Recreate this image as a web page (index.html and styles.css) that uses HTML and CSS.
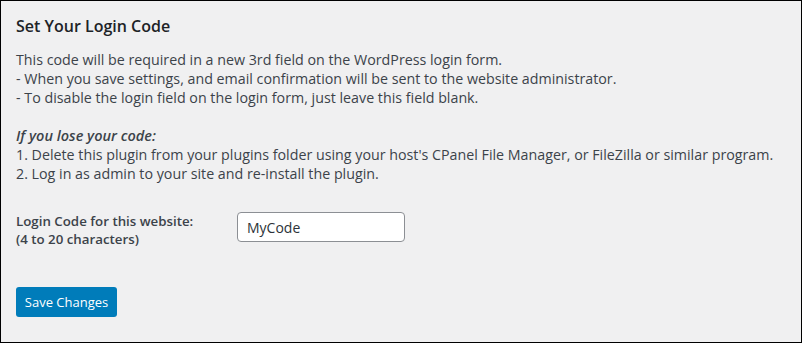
FILE: index.html
```html
<!DOCTYPE html>
<html lang="en">

<head>
    <meta charset="UTF-8">
    <meta name="viewport" content="width=device-width, initial-scale=1.0">
    <title>Set Your Login Code</title>
    <link rel="stylesheet" href="styles.css">
</head>

<body>
    <!-- 설정 박스 -->
    <div class="wrap">
        <h2 class="title">Set Your Login Code</h2>

        <p class="desc">
            This code will be required in a new 3rd field on the WordPress login form.<br>
            - When you save settings, and email confirmation will be sent to the website administrator.<br>
            - To disable the login field on the login form, just leave this field blank.
        </p>

        <p class="desc">
            <em class="lose">If you lose your code:</em><br>
            1. Delete this plugin from your plugins folder using your host's CPanel File Manager, or FileZilla or similar program.<br>
            2. Log in as admin to your site and re-install the plugin.
        </p>

        <!-- 입력 줄 -->
        <div class="row">
            <label class="lbl" for="code">Login Code for this website:<br>(4 to 20 characters)</label>
            <input type="text" id="code" class="code" value="MyCode">
        </div>

        <div class="submit">
            <button class="btn">Save Changes</button>
        </div>
    </div>
</body>

</html>
```

FILE: styles.css
```css
html,
body {
    margin: 0;
    padding: 0;
}

body {
    background: #fff;
    font-family: "Open Sans", "Liberation Sans", sans-serif;
    font-size: 14.25px;
    color: #3c434a;
}

/* 전체 박스 */
.wrap {
    width: 802px;
    height: 343px;
    box-sizing: border-box;
    border: 1px solid #000;
    background: #f0f0f1;
    padding: 0 15px;
}

.title {
    margin: 0;
    padding-top: 15px;
    font-size: 16px;
    font-weight: 600;
    line-height: 20px;
    color: #1d2327;
}

.desc {
    margin: 14px 0 0;
    line-height: 19px;
}

.desc + .desc {
    margin-top: 19px;
}

.lose {
    font-weight: 600;
    font-size: 14.5px;
}

/* 입력 줄 */
.row {
    display: flex;
    align-items: flex-start;
    margin-top: 29px;
}

.lbl {
    width: 221px;
    font-size: 13.3px;
    font-weight: 600;
    line-height: 18px;
}

.code {
    width: 168px;
    height: 30px;
    box-sizing: border-box;
    padding: 0 9px;
    border: 1px solid #8c8f94;
    border-radius: 4px;
    background: #fff;
    font: inherit;
    font-size: 14px;
    color: #2c3338;
}

.submit {
    margin-top: 39px;
}

.btn {
    width: 101px;
    height: 30px;
    border: 0;
    border-radius: 3px;
    background: #007cba;
    color: #fff;
    font: inherit;
    font-size: 13px;
    padding: 0;
}
```
